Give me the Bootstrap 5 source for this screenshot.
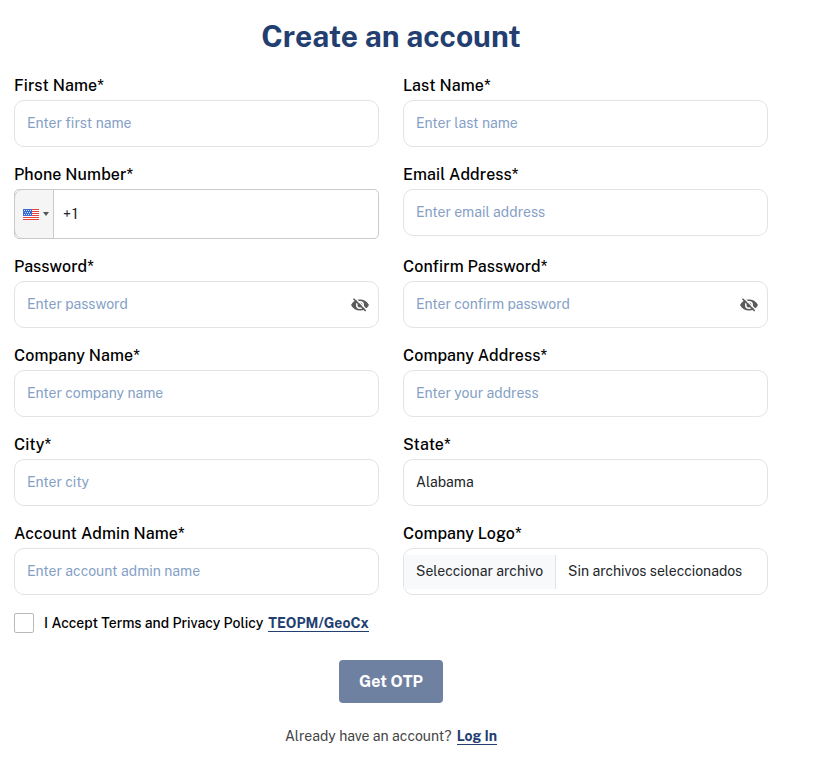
<!DOCTYPE html>
<html lang="en">
<head>
<meta charset="utf-8">
<meta name="viewport" content="width=device-width, initial-scale=1">
<title>Create an account</title>
<link href="https://cdn.jsdelivr.net/npm/bootstrap@5.3.0/dist/css/bootstrap.min.css" rel="stylesheet">
<style>
body{font-family:"Public Sans",Inter,"Liberation Sans",sans-serif;color:#212529;overflow:hidden}
.signup{width:754px;margin-left:14px;padding-top:12px}
.signup h1{font-size:30px;font-weight:700;line-height:48px;color:#233e70;margin-bottom:14px;letter-spacing:0}
.fields{--bs-gutter-x:24px}
.field{margin-bottom:16px}
.field .form-label{display:block;font-size:16px;font-weight:500;line-height:24px;color:#000;margin-bottom:2px;letter-spacing:.09px}
.field .form-control{height:47px;border:1px solid #e2e3e5;border-radius:10px;font-size:14px;padding:0 12px 2px;color:#212529;letter-spacing:0}
.field .form-control::placeholder{color:#869fc6;opacity:1}
.phone{height:50px;border:1px solid #cacaca;border-radius:5px;font-size:14px}
.dial{width:39px;background:#f5f5f5;border-right:1px solid #cacaca;border-radius:8px 0 0 8px;box-shadow:-1px 0 0 #cacaca;padding-left:8px}
.flag{margin-top:1px}
.caret{border:3px solid transparent;border-top:4px solid #555;border-bottom:0;margin-left:4px}
.plus{margin-left:1px;letter-spacing:.9px;font-size:14.5px}
.eye{position:absolute;right:10.500px;top:17px;width:18px;height:14px}
.file-btn{background:#f8f9fa;border-right:1px solid #e2e3e5;height:34px;width:152px;padding-left:12px}
.terms{font-size:14px;font-weight:500;color:#000;height:22px;margin-top:1px}
.terms .form-check-input{width:20px;height:20px;margin:0 10px 0 0;border:1px solid #b9b9b9;border-radius:2px;float:none}
.brand-link{font-weight:700;color:#233e70;line-height:16px;border-bottom:1px solid #233e70;margin-left:5px}
.otp{width:104px;height:43px;background:#6f81a1;color:#fff;font-weight:700;font-size:16px;border-radius:4px;margin-top:26px}
.otp:hover{background:#5f7194;color:#fff}
.login{font-size:14px;color:#444;margin-top:23px}
</style>
</head>
<body>
<svg class="d-none"><symbol id="eye-off" viewBox="0 0 18 14"><path fill="#5a5a5a" fill-rule="evenodd" d="M0 7C2 3.3 5.3 1.5 9 1.5S16 3.3 18 7c-2 3.700-5.300 5.500-9 5.500S2 10.700 0 7zM9 3a4 4 0 1 0 0 8 4 4 0 0 0 0-8z"/><circle cx="9" cy="7" r="2.500" fill="#5a5a5a"/><path stroke="#fff" stroke-width="1.300" d="M4.200 .2 16 12"/><path stroke="#5a5a5a" stroke-width="1.600" d="M2.500 .8 14.700 13"/></symbol></svg>
<main class="signup">
<h1 class="text-center">Create an account</h1>
<form>
<div class="row fields">
<div class="col-6 field"><label class="form-label" for="fn">First Name*</label><input id="fn" class="form-control" placeholder="Enter first name"></div>
<div class="col-6 field"><label class="form-label" for="ln">Last Name*</label><input id="ln" class="form-control" placeholder="Enter last name"></div>
<div class="col-6 field"><span class="form-label">Phone Number*</span>
<div class="phone d-flex align-items-stretch"><div class="dial d-flex align-items-center">
<svg class="flag" width="16" height="11" viewBox="0 0 16 11" shape-rendering="crispEdges"><path fill="#fff" d="M0 0h16v11H0z"/><path fill="#e4443c" d="M0 0h16v1H0zM0 2h16v1H0zM0 4h16v1H0zM0 6h16v1H0zM0 8h16v1H0zM0 10h16v1H0z"/><path fill="#3c6cd0" d="M0 0h9v7H0z"/><path fill="#c7d9fa" d="M1 1h1v1H1zM3 1h1v1H3zM5 1h1v1H5zM7 1h1v1H7zM2 3h1v1H2zM4 3h1v1H4zM6 3h1v1H6zM1 5h1v1H1zM3 5h1v1H3zM5 5h1v1H5zM7 5h1v1H7z"/></svg>
<span class="caret"></span></div><div class="d-flex align-items-center ps-2"><span class="plus">+1</span></div></div></div>
<div class="col-6 field"><label class="form-label" for="em">Email Address*</label><input id="em" class="form-control" placeholder="Enter email address"></div>
<div class="col-6 field"><label class="form-label" for="pw">Password*</label><div class="position-relative"><input id="pw" type="password" class="form-control" placeholder="Enter password"><svg class="eye"><use href="#eye-off"/></svg></div></div>
<div class="col-6 field"><label class="form-label" for="cp">Confirm Password*</label><div class="position-relative"><input id="cp" type="password" class="form-control" placeholder="Enter confirm password"><svg class="eye"><use href="#eye-off"/></svg></div></div>
<div class="col-6 field"><label class="form-label" for="cn">Company Name*</label><input id="cn" class="form-control" placeholder="Enter company name"></div>
<div class="col-6 field"><label class="form-label" for="ca">Company Address*</label><input id="ca" class="form-control" placeholder="Enter your address"></div>
<div class="col-6 field"><label class="form-label" for="ct">City*</label><input id="ct" class="form-control" placeholder="Enter city"></div>
<div class="col-6 field"><label class="form-label" for="st">State*</label><input id="st" class="form-control" value="Alabama"></div>
<div class="col-6 field"><label class="form-label" for="an">Account Admin Name*</label><input id="an" class="form-control" placeholder="Enter account admin name"></div>
<div class="col-6 field"><span class="form-label">Company Logo*</span><div class="form-control d-flex align-items-center p-0"><span class="file-btn d-flex align-items-center"><span>Seleccionar archivo</span></span><span class="ps-2 ms-1">Sin archivos seleccionados</span></div></div>
</div>
<div class="terms d-flex align-items-center"><input type="checkbox" class="form-check-input" id="tc"><label for="tc" class="accept">I Accept Terms and Privacy Policy</label><a href="#" class="brand-link text-decoration-none">TEOPM/GeoCx</a></div>
<div class="text-center"><button type="button" class="btn otp p-0 border-0">Get OTP</button></div>
<p class="login d-flex justify-content-center align-items-center mb-0"><span class="ask">Already have an account?</span><a href="#" class="brand-link text-decoration-none">Log In</a></p>
</form>
</main>
<script src="https://cdn.jsdelivr.net/npm/bootstrap@5.3.0/dist/js/bootstrap.bundle.min.js"></script>
</body>
</html>
